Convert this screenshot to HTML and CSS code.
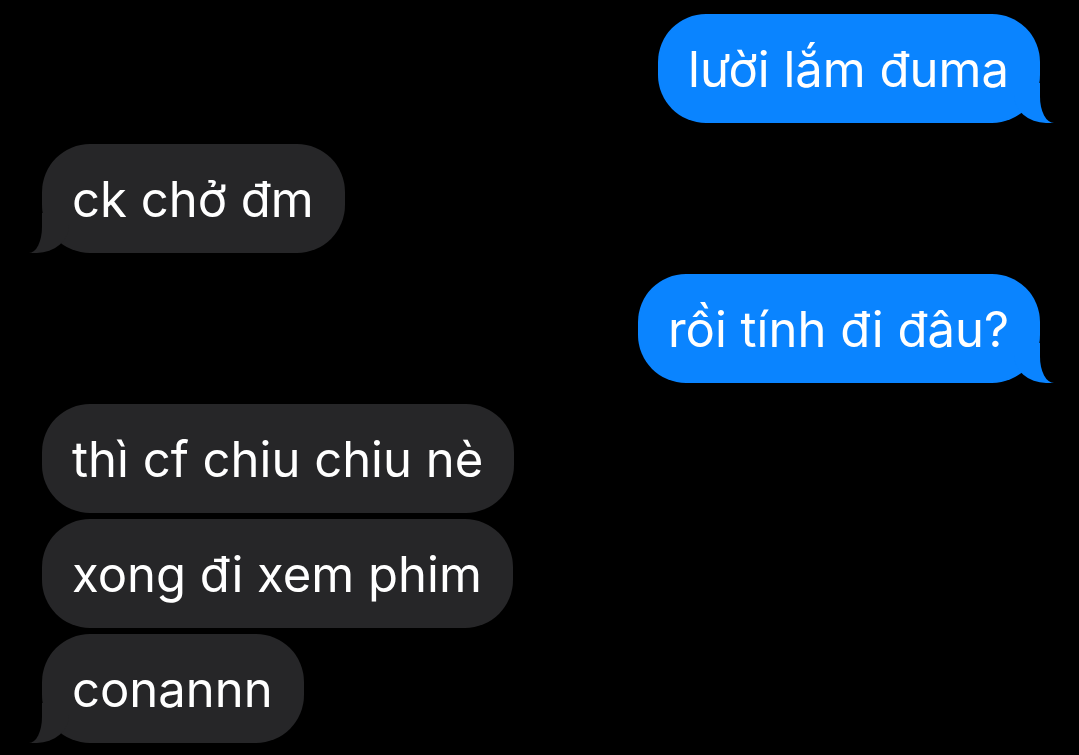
FILE: index.html
```html
<!DOCTYPE html>
<html lang="vi">

<head>
    <meta charset="UTF-8" />
    <title>Tin nhắn</title>
    <link rel="stylesheet" href="styles.css">
</head>

<body>

    <div class="chat">
        <div class="msg sent tail">lười lắm đuma</div>

        <div class="msg received tail group">ck chở đm</div>

        <div class="msg sent tail group">rồi tính đi đâu?</div>

        <div class="msg received group">thì cf chiu chiu nè</div>
        <div class="msg received">xong đi xem phim</div>
        <div class="msg received tail">conannn</div>
    </div>

</body>

</html>
```

FILE: styles.css
```css
body {
    margin: 0;
    background: #000;
    font-family: Inter, "Noto Sans", sans-serif;
}

.chat {
    display: flex;
    flex-direction: column;
    gap: 6px;
    padding: 14px 39px 0 42px;
}

.msg {
    position: relative;
    font-size: 49px;
    line-height: 59px;
    padding: 26px 31px 24px 30px;
    border-radius: 48px;
    color: #fff;
    max-width: 70%;
}

.group {
    margin-top: 15px;
}

.sent {
    align-self: flex-end;
    background: #0a84ff;
}

.received {
    align-self: flex-start;
    background: #262628;
}

/* đuôi bong bóng */
.tail::before,
.tail::after {
    content: "";
    position: absolute;
    bottom: 0;
    height: 40px;
}

.sent.tail::before {
    right: -14px;
    border-right: 40px solid #0a84ff;
    border-bottom-left-radius: 32px 28px;
}

.sent.tail::after {
    right: -30px;
    width: 30px;
    background: #000;
    border-bottom-left-radius: 14px 26px;
}

.received.tail::before {
    left: -13px;
    border-left: 40px solid #262628;
    border-bottom-right-radius: 32px 28px;
}

.received.tail::after {
    left: -30px;
    width: 30px;
    background: #000;
    border-bottom-right-radius: 13px 26px;
}
```
